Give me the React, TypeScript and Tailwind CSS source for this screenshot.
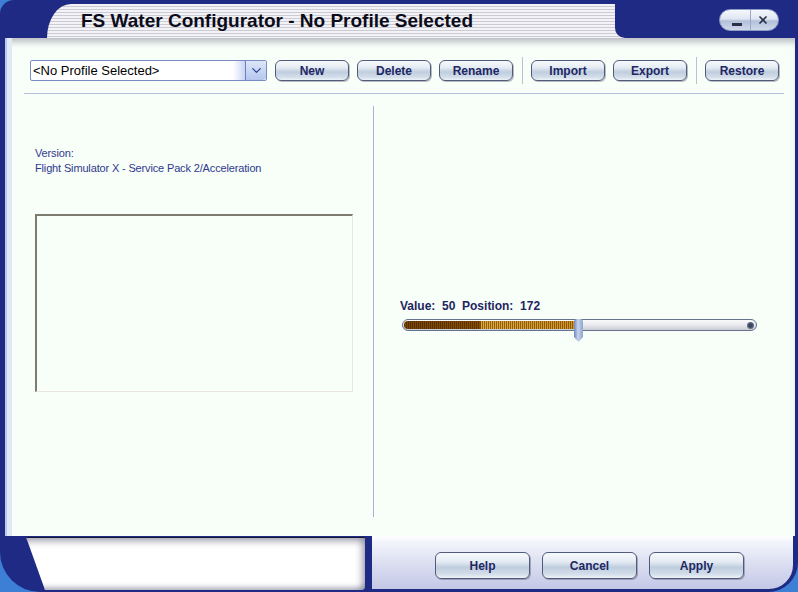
import React from "react";
import { ChevronDown, X } from "lucide-react";

const TOOLBAR = ["New", "Delete", "Rename", "|", "Import", "Export", "|", "Restore"];
const FOOTER = ["Help", "Cancel", "Apply"];

const btnClasses =
  "flex items-center justify-center rounded-[6px] border border-[#4f5b78] bg-[linear-gradient(180deg,#f7fafd_0%,#e4ebf3_35%,#bfcdde_58%,#d3deea_85%,#eef3f8_100%)] font-bold text-[#1d2763] shadow-[1px_1px_0_rgba(40,40,70,0.3)]";

const Slider = ({ position }: { position: number }) => (
  <div className="relative ml-[2px] mt-[4px] h-[23px] w-[355px]">
    <div className="mt-[5px] flex h-[12px] items-center rounded-full border border-[#66738f] bg-[linear-gradient(180deg,#fbfbfc_0%,#e9eaee_50%,#c9ccd4_100%)] px-[1px]">
      <div
        className="h-[8px] rounded-l-full bg-[repeating-linear-gradient(90deg,rgba(40,20,0,0.45)_0px,rgba(40,20,0,0.45)_1px,transparent_1px,transparent_2px),linear-gradient(90deg,#7a4300_0%,#8a5000_44%,#e2a634_45%,#d49220_100%)]"
        style={{ width: position }}
      />
      <div className="flex-1" />
      <div className="mr-[1px] h-[7px] w-[7px] rounded-full bg-[radial-gradient(circle,#3a4660_30%,#8c98b0_100%)]" />
    </div>
    <div
      className="absolute top-0 h-[23px] w-[9px] rounded-t-[3px] bg-[linear-gradient(90deg,#6f86b8_0%,#c6d4ee_45%,#8ea4cc_100%)] [clip-path:polygon(0_0,100%_0,100%_78%,50%_100%,0_78%)]"
      style={{ left: position }}
    />
  </div>
);

export default function App() {
  return (
    <div className="h-[592px] w-[798px] overflow-hidden bg-[#3c7fd4] font-['Liberation_Sans',Arial,sans-serif]">
      <div className="flex h-full flex-col rounded-tl-[14px] rounded-tr-[16px] rounded-bl-[40px] rounded-br-[30px] bg-[#1f2a85]">
        {/* Title bar */}
        <div className="flex h-[38px]">
          <div className="w-[47px]" />
          <div className="mt-[4px] flex flex-1 rounded-tl-[24px_34px] bg-[repeating-linear-gradient(180deg,#f3f3f7_0px,#f3f3f7_2px,#cbcbd4_2px,#cbcbd4_3px)]">
            <div className="flex-1 pl-[34px] text-[19px] font-bold leading-[34px] text-[#0b0b1a]">
              FS Water Configurator - No Profile Selected
            </div>
            <div className="-mt-[4px] flex w-[183px] justify-end rounded-bl-[10px] bg-[#1f2a85] pr-[19px] pt-[9px]">
              <div className="flex h-[22px] w-[60px] overflow-hidden rounded-full border border-[#8b9cc6] bg-[linear-gradient(180deg,#f5f8fc_0%,#dfe6f2_45%,#b2c0da_55%,#d0d9ea_100%)]">
                <div className="flex w-[30px] items-end justify-center pb-[4px] pl-[4px]">
                  <div className="h-[3px] w-[10px] bg-[#2c3048]" />
                </div>
                <div className="w-px bg-[#9aa8c8]" />
                <div className="flex flex-1 items-center justify-center pr-[3px]">
                  <X size={12} strokeWidth={3.4} color="#2c3048" />
                </div>
              </div>
            </div>
          </div>
        </div>

        {/* Content */}
        <div className="ml-[5px] mr-[3px] flex flex-1 flex-col border-l-[2px] border-[#b9c8e8] bg-[#f8fef8] shadow-[inset_5px_0_0_#e0e9f6,inset_0_7px_6px_-3px_rgba(70,70,100,0.35)]">
          {/* Toolbar */}
          <div className="mt-[19px] flex h-[27px] items-center gap-[8px] pl-[23px]">
            <div className="flex h-[21px] w-[237px] rounded-[2px] border border-[#7b8bc4] bg-white">
              <div className="flex flex-1 items-center pl-[2px] text-[13px] text-black">&lt;No Profile Selected&gt;</div>
              <div className="w-[12px] bg-[linear-gradient(90deg,#ffffff,#c7d4f3)]" />
              <div className="flex w-[21px] items-center justify-center rounded-r-[3px] border-l border-[#6d7fc0] bg-[linear-gradient(180deg,#dde7fb,#b5c6ee)]">
                <ChevronDown size={15} strokeWidth={2} color="#34458f" />
              </div>
            </div>
            {TOOLBAR.map((label, i) =>
              label === "|" ? (
                <div key={i} className="ml-[1px] h-[27px] w-px bg-[#b8c2d6]" />
              ) : (
                <div key={i} className={`${btnClasses} h-[21px] w-[74px] text-[12px]`}>
                  {label}
                </div>
              )
            )}
          </div>
          <div className="ml-[17px] mt-[9px] h-px w-[760px] bg-[#b4c2dc]" />

          {/* Main */}
          <div className="flex flex-1">
            <div className="w-[366px] pl-[28px] pt-[52px]">
              <div className="text-[11px] leading-[15px] tracking-[-0.15px] text-[#2f3a8e]">
                <div>Version:</div>
                <div>Flight Simulator X - Service Pack 2/Acceleration</div>
              </div>
              <div className="mt-[38px] h-[178px] w-[318px] border-b border-l-[2px] border-r border-t-[2px] border-b-[#e8e6de] border-l-[#7e7c70] border-r-[#e8e6de] border-t-[#7e7c70]" />
            </div>
            <div className="mb-[19px] mt-[12px] w-[2px] border-l border-[#a6b2d2] bg-white" />
            <div className="flex-1 pl-[25px] pt-[205px]">
              <div className="whitespace-pre text-[12px] font-bold leading-[15px] text-[#1e2660]">
                Value:  50  Position:  172
              </div>
              <Slider position={172} />
            </div>
          </div>
        </div>

        {/* Footer */}
        <div className="flex h-[56px]">
          <div className="ml-[26px] mt-[1px] h-[53px] w-[339px] rounded-br-[4px] border-t border-[#15183a] bg-white shadow-[inset_0_6px_6px_-2px_rgba(90,90,120,0.45),inset_-6px_0_6px_-2px_rgba(90,90,120,0.4),inset_0_-5px_5px_-2px_rgba(90,90,120,0.4)] [clip-path:polygon(0_0,100%_0,100%_100%,19px_100%)]" />
          <div className="w-[7px]" />
          <div className="mb-[3px] mr-[5px] flex flex-1 gap-[12px] rounded-br-[24px] bg-[linear-gradient(180deg,#ffffff_0px,#f4f6fc_5px,#dfe2f2_45%,#c3c7e6_100%)] pl-[63px] pt-[16px]">
            {FOOTER.map((label) => (
              <div key={label} className={`${btnClasses} h-[27px] w-[95px] text-[12px]`}>
                {label}
              </div>
            ))}
          </div>
        </div>
      </div>
    </div>
  );
}
